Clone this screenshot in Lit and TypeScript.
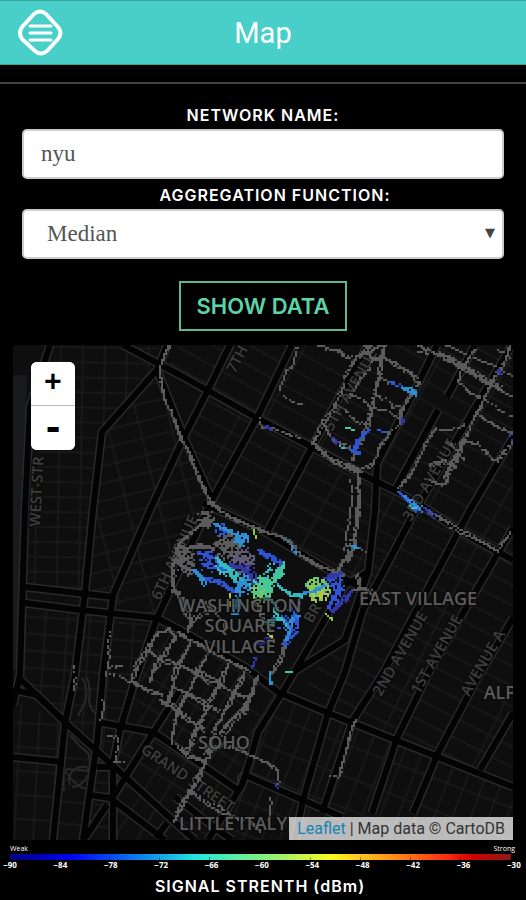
import { LitElement, html, svg, css } from "lit";
import { customElement, state } from "lit/decorators.js";

type Pt = [number, number];

/* ---------- street network ---------- */
const AVENUES: string[] = [
  "50,345 30,407 25,510 20,675 13,705",
  "167,345 157,370 102,432 93,510 85,593 75,675 65,723 53,840",
  "157,370 183,435 212,500",
  "230,345 208,390 185,435 150,510 113,595 103,675 97,743 83,840",
  "292,345 257,418 212,500 157,618 135,680 120,730 113,763 113,840",
  "368,345 312,447 268,530",
  "437,345 415,390 377,463 375,510 368,572 345,640 292,673",
  "368,572 345,585 292,676 282,693 258,732 250,760 242,785 208,840",
  "475,345 447,397",
  "438,410 395,490",
  "512,345 462,430 413,515 363,610 345,672 328,713 303,800 295,840",
  "513,437 470,510 382,675 353,720 322,813",
  "513,528 498,553 430,670 397,738 372,813",
  "513,618 478,677 438,753 413,813",
  "513,713 480,770",
  "123,345 180,375 257,418 312,447 363,475 398,492 425,508 458,530 498,552 513,560",
  "203,503 265,532 332,572 358,586",
  "25,587 113,597",
  "25,603 80,610 157,618 180,630 245,667 278,692 328,713 395,740 438,757 513,787",
  "13,690 37,695 68,725",
  "18,677 68,725 110,763 180,827 195,840",
  "13,757 62,762",
  "97,722 153,732 180,750 238,790",
  "245,775 342,817",
  "90,795 110,798 165,840",
  "113,797 153,733 180,690",
  "107,805 85,838",
  "167,823 156,838",
  "97,767 113,767",
  "175,797 215,828 232,840",
];

/* Blocks hatched with side streets: outline, angle, spacing across, spacing along */
const BLOCKS: [string, number, number, number][] = [
  ["180,345 513,345 513,560 425,508 312,447 165,370", 29, 18, 62],
  ["183,435 210,392 257,418 425,508 375,600 212,503", 28, 17, 58],
  ["425,508 513,560 513,787 300,698 370,572", 27, 18, 96],
  ["50,345 157,345 157,372 102,432 85,593 25,587", 1, 15, 22],
  ["157,372 183,435 205,500 157,618 85,593 102,432", -14, 17, 31],
  ["25,603 157,618 113,763 18,677", 4, 17, 22],
  ["13,700 68,725 53,840 13,840", 3, 24, 19],
  ["68,725 113,763 113,840 55,840", 5, 22, 31],
  ["157,618 278,692 208,840 113,840 113,763", 32, 26, 20],
  ["278,692 513,787 513,840 208,840", 21, 30, 17],
];

const RAMPS = [
  "M82,678 q6,8 4,22 l-8,16 M87,678 q4,10 2,22 q2,12 8,14",
  "M70,735 q12,14 18,18 q4,10 0,18 l-20,-2 q-6,0 -4,22",
  "M70,785 q-4,-14 10,-18 q12,-2 8,8 q-6,12 -16,12 M66,772 q14,20 24,16",
  "M238,777 l3,-4 l2,8 l-5,4 z M232,788 l4,2",
];

/* ---------- labels ---------- */
const PLACES: [string, number, number][] = [
  ["EAST VILLAGE", 418, 605],
  ["WASHINGTON", 240, 612],
  ["SQUARE", 240, 632],
  ["VILLAGE", 240, 653],
  ["SOHO", 224, 749],
  ["LITTLE ITALY", 233, 830],
  ["ALPHABET CITY", 550, 699],
];
const STREETS: [string, number, number, number][] = [
  ["WEST-STR", 40, 527, -87],
  ["7TH AVENUE", 235, 374, -62],
  ["6TH AVENUE", 160, 601, -65],
  ["5TH AVENUE", 332, 432, -60],
  ["3RD AVENUE", 411, 522, -60],
  ["2ND AVENUE", 381, 697, -60],
  ["1ST AVENUE", 419, 695, -60],
  ["AVENUE A", 469, 697, -60],
  ["GRAND STREET", 140, 752, 34],
  ["BR", 312, 624, -60],
];

/* ---------- signal samples ---------- */
const GREY = "#5b5b5b";
const NAVY = "#3136a8";
const BLUE = "#2b55d6";
const AZURE = "#2c8fd6";
const CYAN = "#33bcc0";
const TEAL = "#48c796";
const GREEN = "#8cc850";
const YELLOW = "#c2c244";

/* colour, wander in px, passes, points */
const TRACES: [string, number, number, Pt[]][] = [
  [GREY, 1, 3, [[169, 345], [160, 370], [165, 400], [172, 412], [180, 435], [190, 455], [200, 480], [211, 502], [222, 512]]],
  [GREY, 2, 1, [[297, 345], [292, 365], [285, 370], [278, 390]]],
  [GREY, 1, 1, [[284, 397], [292, 402], [302, 405]]],
  [GREY, 1, 2, [[317, 345], [330, 350], [340, 352], [345, 358]]],
  [GREY, 2, 1, [[259, 418], [262, 428], [278, 430], [303, 437]]],
  [GREY, 2, 2, [[345, 385], [335, 405], [322, 425], [313, 443]]],
  [GREY, 3, 4, [[313, 443], [325, 455], [345, 466], [360, 472]]],
  [GREY, 3, 2, [[325, 427], [332, 440], [350, 450]]],
  [GREY, 2, 2, [[345, 358], [362, 355], [383, 347]]],
  [GREY, 3, 4, [[365, 345], [372, 362], [383, 358], [384, 345]]],
  [GREY, 2, 3, [[383, 350], [378, 380], [372, 410], [366, 430], [352, 460]]],
  [GREY, 3, 3, [[383, 358], [400, 368], [413, 376], [418, 385]]],
  [GREY, 2, 1, [[380, 378], [395, 384]]],
  [GREY, 2, 2, [[418, 385], [408, 397], [402, 410], [401, 424]]],
  [GREY, 2, 1, [[375, 396], [388, 400], [393, 408], [402, 405]]],
  [GREY, 2, 1, [[372, 408], [385, 412], [400, 420]]],
  [GREY, 2, 1, [[350, 395], [362, 402], [372, 410]]],
  [GREY, 2, 1, [[345, 410], [355, 420], [368, 424]]],
  [GREY, 2, 2, [[400, 424], [388, 433], [378, 450], [373, 462], [360, 472], [350, 465]]],
  [GREY, 2, 2, [[345, 378], [352, 365], [372, 345]]],
  [GREY, 1, 1, [[350, 398], [360, 378], [370, 368]]],
  [GREY, 3, 4, [[358, 474], [359, 500], [357, 520], [354, 540], [347, 562]]],
  [GREY, 2, 1, [[350, 545], [363, 550], [365, 555]]],
  [GREY, 2, 1, [[350, 480], [353, 500], [350, 520], [345, 550]]],
  [GREY, 1, 2, [[418, 345], [440, 356], [462, 368], [490, 385], [513, 397]]],
  [GREY, 1, 1, [[415, 352], [430, 355]]],
  [GREY, 2, 3, [[440, 353], [455, 362], [478, 374], [500, 388]]],
  [GREY, 1, 1, [[445, 345], [465, 355]]],
  [GREY, 1, 2, [[475, 349], [462, 370], [458, 382], [470, 393], [482, 399]]],
  [GREY, 1, 2, [[510, 345], [503, 365], [490, 385], [480, 408], [467, 435], [460, 445]]],
  [GREY, 1, 1, [[475, 357], [490, 364], [513, 376]]],
  [GREY, 1, 1, [[498, 350], [511, 358]]],
  [GREY, 1, 1, [[483, 399], [497, 408], [513, 418]]],
  [GREY, 1, 2, [[478, 415], [495, 425], [513, 435]]],
  [GREY, 1, 2, [[436, 428], [425, 445], [410, 475], [398, 490]]],
  [GREY, 1, 1, [[436, 428], [450, 431], [465, 424]]],
  [GREY, 2, 2, [[462, 440], [478, 442], [488, 452], [496, 460], [505, 452], [512, 440]]],
  [GREY, 3, 4, [[465, 440], [458, 455], [450, 468], [445, 480]]],
  [GREY, 3, 3, [[430, 465], [445, 463], [457, 470]]],
  [GREY, 2, 2, [[430, 480], [445, 484], [448, 473]]],
  [GREY, 2, 1, [[448, 442], [458, 450], [465, 460]]],
  [GREY, 2, 2, [[425, 510], [445, 521], [458, 530], [480, 541], [498, 552]]],
  [GREY, 1, 2, [[498, 552], [503, 542], [512, 533]]],
  [GREY, 1, 3, [[208, 503], [230, 517], [250, 526], [272, 534], [288, 540], [302, 556], [322, 568], [345, 575]]],
  [GREY, 4, 5, [[345, 560], [340, 568], [337, 575]]],
  [GREY, 4, 5, [[352, 590], [365, 590], [374, 596]]],
  [GREY, 3, 3, [[357, 575], [362, 588]]],
  [GREY, 2, 2, [[200, 525], [180, 545], [174, 565], [174, 590], [185, 600]]],
  [GREY, 4, 4, [[176, 548], [200, 548], [215, 552]]],
  [GREY, 5, 4, [[186, 550], [180, 562], [192, 575]]],
  [GREY, 3, 3, [[176, 590], [184, 605], [190, 622]]],
  [GREY, 3, 2, [[200, 600], [215, 612], [225, 630]]],
  [GREY, 3, 2, [[188, 632], [196, 618], [212, 606]]],
  [GREY, 3, 2, [[255, 603], [262, 620], [270, 632]]],
  [GREY, 2, 3, [[285, 640], [283, 655], [275, 668], [268, 675]]],
  [GREY, 2, 1, [[110, 632], [111, 650], [108, 672]]],
  [GREY, 2, 2, [[107, 667], [122, 667]]],
  [GREY, 1, 1, [[105, 675], [122, 677], [133, 683]]],
  [GREY, 1, 1, [[103, 700], [101, 722]]],
  [GREY, 1, 1, [[108, 736], [117, 738], [116, 762]]],
  [GREY, 1, 1, [[115, 763], [125, 762]]],
  [GREY, 1, 1, [[75, 665], [76, 690]]],
  [GREY, 2, 3, [[133, 680], [137, 665], [150, 645], [158, 632], [168, 630], [176, 638]]],
  [GREY, 2, 3, [[176, 638], [165, 655], [155, 668], [150, 682]]],
  [GREY, 3, 3, [[133, 682], [148, 692], [162, 697]]],
  [GREY, 2, 2, [[148, 650], [160, 660], [178, 665], [195, 675], [212, 685]]],
  [GREY, 2, 3, [[178, 632], [190, 640], [210, 652], [232, 664], [250, 673]]],
  [GREY, 2, 3, [[190, 642], [180, 660], [173, 680], [168, 702]]],
  [GREY, 2, 3, [[208, 652], [200, 670], [190, 690], [178, 710], [173, 745]]],
  [GREY, 2, 3, [[228, 664], [220, 685], [210, 700], [200, 722], [188, 750]]],
  [GREY, 3, 6, [[258, 676], [252, 695], [245, 710], [232, 722], [222, 735]]],
  [GREY, 2, 3, [[245, 672], [236, 690], [228, 708], [215, 730], [206, 755]]],
  [GREY, 2, 3, [[160, 700], [175, 708], [190, 722], [205, 730]]],
  [GREY, 2, 2, [[172, 685], [190, 695], [208, 705], [220, 712]]],
  [GREY, 2, 2, [[195, 668], [215, 680], [235, 692], [250, 700]]],
  [GREY, 2, 3, [[175, 745], [190, 757], [205, 762], [215, 748], [225, 742]]],
  [GREY, 1, 2, [[225, 745], [240, 750], [255, 757], [267, 762], [278, 770]]],
  [GREY, 1, 1, [[278, 770], [278, 785]]],
  [GREY, 1, 1, [[270, 798], [271, 812], [268, 820]]],
  [GREY, 2, 3, [[205, 762], [197, 780], [188, 795], [178, 812], [174, 822]]],
  [GREY, 3, 2, [[188, 790], [205, 800], [225, 812], [245, 820]]],
  [GREY, 3, 2, [[250, 822], [262, 832]]],
  [GREY, 1, 2, [[355, 720], [350, 735], [347, 752], [342, 765], [340, 776]]],
  [GREY, 1, 1, [[327, 776], [342, 777]]],
  [NAVY, 1, 2, [[266, 427], [273, 430]]],
  [NAVY, 2, 2, [[332, 439], [338, 443]]],
  [CYAN, 1, 2, [[339, 445], [346, 448]]],
  [TEAL, 1, 1, [[346, 428], [354, 431]]],
  [BLUE, 1, 2, [[390, 382], [403, 387]]],
  [AZURE, 3, 6, [[403, 388], [416, 394]]],
  [NAVY, 2, 2, [[401, 418], [403, 424]]],
  [BLUE, 2, 3, [[370, 430], [360, 438], [355, 450]]],
  [BLUE, 3, 4, [[350, 450], [361, 454]]],
  [BLUE, 1, 2, [[378, 430], [386, 434]]],
  [NAVY, 1, 2, [[499, 370], [501, 375]]],
  [NAVY, 1, 1, [[511, 434], [512, 440]]],
  [BLUE, 3, 4, [[398, 492], [410, 500], [420, 512]]],
  [AZURE, 2, 2, [[403, 496], [414, 505], [424, 510]]],
  [TEAL, 1, 1, [[410, 506], [416, 509]]],
  [NAVY, 2, 2, [[422, 506], [435, 516]]],
  [AZURE, 1, 1, [[288, 543], [298, 555]]],
  [GREEN, 1, 1, [[253, 530], [255, 538]]],
  [AZURE, 3, 4, [[215, 524], [230, 533], [245, 540]]],
  [BLUE, 4, 5, [[198, 553], [215, 558], [225, 572]]],
  [BLUE, 3, 5, [[258, 550], [270, 556], [283, 563]]],
  [BLUE, 3, 4, [[200, 578], [220, 584], [235, 592]]],
  [NAVY, 4, 4, [[230, 565], [250, 570], [254, 585]]],
  [AZURE, 4, 4, [[193, 570], [205, 578], [208, 585]]],
  [CYAN, 4, 6, [[216, 558], [228, 570], [240, 582]]],
  [AZURE, 3, 4, [[240, 580], [238, 600], [235, 615]]],
  [TEAL, 4, 6, [[284, 562], [280, 575], [268, 585]]],
  [YELLOW, 1, 1, [[230, 595], [229, 606]]],
  [CYAN, 2, 3, [[278, 585], [290, 595], [302, 597]]],
  [BLUE, 3, 4, [[299, 602], [294, 615], [295, 630], [285, 645]]],
  [CYAN, 3, 3, [[265, 622], [280, 618], [292, 628]]],
  [AZURE, 2, 3, [[300, 615], [290, 622], [286, 640]]],
  [CYAN, 2, 2, [[272, 600], [277, 612], [272, 626]]],
  [YELLOW, 1, 1, [[268, 634], [275, 642]]],
  [NAVY, 2, 3, [[254, 645], [272, 638]]],
  [NAVY, 1, 2, [[255, 657], [252, 670]]],
  [AZURE, 2, 3, [[271, 672], [270, 684]]],
  [TEAL, 1, 1, [[287, 673], [294, 672]]],
  [NAVY, 3, 4, [[325, 578], [342, 572]]],
  [BLUE, 4, 4, [[340, 576], [338, 592], [330, 610]]],
  [NAVY, 3, 5, [[352, 590], [343, 600], [330, 612]]],
  [AZURE, 3, 3, [[302, 594], [315, 592], [328, 585]]],
  [GREEN, 1, 2, [[325, 615], [332, 620]]],
  [AZURE, 1, 2, [[352, 546], [358, 548]]],
  [NAVY, 1, 1, [[277, 783], [277, 789]]],
];

/* colour, centre, radius, number of samples */
const CLOUDS: [string, Pt, number, number][] = [
  [GREY, [206, 519], 9, 90],
  [GREY, [184, 560], 12, 110],
  [GREY, [228, 546], 14, 170],
  ["#5f5b74", [242, 560], 13, 130],
  [AZURE, [241, 540], 8, 50],
  [BLUE, [222, 530], 6, 24],
  [BLUE, [210, 562], 11, 50],
  [CYAN, [224, 568], 8, 44],
  [AZURE, [245, 583], 12, 100],
  [TEAL, [262, 588], 12, 190],
  [CYAN, [275, 572], 11, 60],
  [GREEN, [260, 595], 10, 22],
  [TEAL, [315, 588], 10, 50],
  [GREEN, [318, 590], 12, 110],
  [YELLOW, [320, 595], 9, 24],
  [BLUE, [335, 585], 11, 46],
  [BLUE, [285, 618], 14, 36],
];

function sampleLayers(): [string, string][] {
  let seed = 7919;
  const rnd = () => {
    seed = (seed * 1103515245 + 12345) % 2147483648;
    return seed / 2147483648;
  };
  const layers: [string, string][] = [];
  const put = (x: number, y: number) =>
    `M${Math.round(x / 2) * 2 - 1},${Math.round(y / 2) * 2 - 1}h2v2h-2z`;
  const trace = ([colour, wander, passes, pts]: (typeof TRACES)[number]) => {
    let d = "";
    for (let p = 0; p < passes; p++) {
      let off = 0;
      for (let i = 1; i < pts.length; i++) {
        const [x0, y0] = pts[i - 1];
        const [x1, y1] = pts[i];
        const len = Math.hypot(x1 - x0, y1 - y0) || 1;
        for (let s = 0; s < len; s += 2) {
          off += (rnd() - 0.5) * 2;
          off = Math.max(-wander, Math.min(wander, off));
          if (rnd() < 0.12) continue;
          const t = s / len;
          d += put(x0 + (x1 - x0) * t - ((y1 - y0) / len) * off, y0 + (y1 - y0) * t + ((x1 - x0) / len) * off);
        }
      }
    }
    layers.push([colour, d]);
  };
  const cloud = ([colour, [cx, cy], r, n]: (typeof CLOUDS)[number]) => {
    let d = "";
    for (let i = 0; i < n; i++) {
      const a = rnd() * Math.PI * 2;
      const q = Math.pow(rnd(), 0.7) * r;
      d += put(cx + Math.cos(a) * q, cy + Math.sin(a) * q);
    }
    layers.push([colour, d]);
  };
  TRACES.filter((t) => t[0] === GREY).forEach(trace);
  CLOUDS.forEach(cloud);
  TRACES.filter((t) => t[0] !== GREY).forEach(trace);
  return layers;
}

@customElement("signal-map")
export class SignalMap extends LitElement {
  private layers = sampleLayers();

  static styles = css`
    :host { display: block; position: relative; background: #0e0e0e; overflow: hidden; }
    .canvas { display: block; width: 100%; height: auto; }
    .side { stroke: #1a1a1a; stroke-width: 1.5; fill: none; }
    .casing { stroke: #292929; stroke-width: 9; fill: none; stroke-linejoin: round; }
    .road { stroke: #030303; stroke-width: 6; fill: none; stroke-linejoin: round; }
    .ramp { stroke: #292929; stroke-width: 2; fill: none; }
    .water { fill: #191a1b; }
    .place, .street { font-family: "Open Sans", "Noto Sans", sans-serif; font-weight: 600; paint-order: stroke; stroke: #0a0a0a; stroke-opacity: .6; stroke-width: 3; }
    .place { font-size: 18px; fill: #6c6c6c; text-anchor: middle; }
    .street { font-size: 15px; fill: #3e3e3e; }
    .zoom { position: absolute; left: 18px; top: 17px; display: flex; flex-direction: column; width: 44px; border-radius: 6px; overflow: hidden; background: #fff; }
    .zoom button { height: 44px; padding: 0 0 6px; border: 0; background: #fff; color: #000; font: bold 28px/36px "DejaVu Sans Mono", monospace; }
    .zoom .in { border-bottom: 1px solid #bbb; }
    .zoom .out { padding: 0; font-size: 36px; }
    .credit { position: absolute; right: 0; bottom: 0; padding: 0 8px; background: rgba(255, 255, 255, .72); color: #333; font: 16px/23px Roboto, sans-serif; }
    .credit a { color: #1583b5; text-decoration: none; }
  `;

  render() {
    return html`
      <svg class="canvas" viewBox="13 345 500 495" role="img" aria-label="Signal strength map">
        <defs>
          ${BLOCKS.map(([, angle, across, along], i) => svg`
            <pattern id="b${i}" patternUnits="userSpaceOnUse" width=${along} height=${across} patternTransform="rotate(${angle})">
              <path class="side" d="M0,1H${along}M1,0V${across}"></path>
            </pattern>`)}
        </defs>
        <polygon class="water" points="13,375 27,375 24,510 18,670 13,670"></polygon>
        ${BLOCKS.map(([pts], i) => svg`<polygon points=${pts} fill="url(#b${i})"></polygon>`)}
        ${AVENUES.map((p) => svg`<polyline class="casing" points=${p}></polyline>`)}
        ${RAMPS.map((d) => svg`<path class="ramp" d=${d}></path>`)}
        ${AVENUES.map((p) => svg`<polyline class="road" points=${p}></polyline>`)}
        ${STREETS.map(([t, x, y, a]) => svg`<text class="street" transform="translate(${x} ${y}) rotate(${a})">${t}</text>`)}
        <g>${this.layers.map(([c, d]) => svg`<path fill=${c} d=${d}></path>`)}</g>
        ${PLACES.map(([t, x, y]) => svg`<text class="place" fill-opacity=".85" x=${x} y=${y}>${t}</text>`)}
      </svg>
      <div class="zoom">
        <button class="in" type="button" aria-label="Zoom in">+</button>
        <button class="out" type="button" aria-label="Zoom out">-</button>
      </div>
      <div class="credit"><a href="#leaflet">Leaflet</a> | Map data © CartoDB</div>
    `;
  }
}

@customElement("signal-scale")
export class SignalScale extends LitElement {
  static styles = css`
    :host { display: block; color: #fff; }
    .ends { display: flex; justify-content: space-between; padding: 0 11px 0 10px; font: 7px/8px "Open Sans", sans-serif; }
    .bar { height: 6px; margin: 1px 15px 0 10px; background:
      repeating-linear-gradient(90deg, transparent 0 calc(10% - 1px), rgba(0, 0, 0, .35) calc(10% - 1px) 10%) 0 100% / 100% 3px no-repeat,
      linear-gradient(90deg, #00007f, #0000f0 12%, #0a78f0 25%, #22e6e0 37%, #7cf080 50%, #f8f820 64%, #ff9a18 75%, #ff3010 87%, #d00000 92%, #8b1a1a); }
    .ticks { display: flex; justify-content: space-between; margin: 0; padding: 0 2px 0 0; list-style: none; font: bold 8px/10px "Open Sans", sans-serif; }
    .ticks li { width: 20px; text-align: center; }
    .name { margin: 6px 0 0; padding-right: 6px; text-align: center; font: 600 16px/20px Inter, sans-serif; letter-spacing: 1px; }
  `;
  render() {
    const ticks = Array.from({ length: 11 }, (_, i) => 90 - i * 6);
    return html`
      <div class="ends"><span>Weak</span><span>Strong</span></div>
      <div class="bar"></div>
      <ul class="ticks">${ticks.map((t) => html`<li>−${t}</li>`)}</ul>
      <p class="name">SIGNAL STRENTH (dBm)</p>
    `;
  }
}

@customElement("app-root")
export class AppRoot extends LitElement {
  @state() private network = "nyu";

  static styles = css`
    :host { display: block; min-height: 100vh; background: #000; color: #fff; }
    * { box-sizing: border-box; }
    header { display: grid; grid-template-columns: 48px 1fr 48px; align-items: center; height: 65px; padding: 0 17px; background: #48cfc9; border-top: 1px solid #3aa8a2; border-bottom: 1px solid #3f9f9b; }
    .menu { width: 48px; height: 48px; padding: 0; border: 0; background: none; }
    .menu svg { display: block; }
    h1 { margin: 0; text-align: center; font: 400 29px/36px Roboto, sans-serif; }
    hr { margin: 17px 0 0; border: 0; border-top: 2px solid #444; }
    form { display: flex; flex-direction: column; align-items: center; padding: 21px 22px 0; }
    label { font: 600 16px/20px Inter, sans-serif; letter-spacing: 1px; margin-bottom: 4px; }
    .second { margin-top: 6px; padding-left: 24px; }
    .field { position: relative; width: 100%; }
    .box { display: block; width: 100%; height: 50px; border: 2px solid #ccc; border-radius: 5px; background: #fff; color: #555; font: 23px/30px "Liberation Serif", serif; appearance: none; outline: 0; }
    input.box { padding: 0 17px; }
    select.box { padding: 0 23px; }
    .arrow { position: absolute; right: 9px; top: 14px; color: #444; font: 13px/20px "DejaVu Sans", sans-serif; pointer-events: none; }
    .show { height: 50px; margin-top: 22px; padding: 0 16px; border: 2px solid #5cb898; background: #000; color: #5fd3a8; font: 600 22px/30px Inter, sans-serif; }
    signal-map { margin: 14px 13px 5px; }
  `;

  render() {
    return html`
      <header>
        <button class="menu" type="button" aria-label="Menu">
          <svg width="48" height="48" viewBox="0 0 48 48" fill="none" stroke="#fff" stroke-linecap="round">
            <path stroke-width="4" stroke-linejoin="round" d="M17 5 Q23 0 29 5 L41 18 Q46 24 41 30 L30 42 Q24 47 18 42 L5 30 Q1 24 5 18 Z"></path>
            <path stroke-width="3" d="M13 17H34M13 24H34M13 31H34"></path>
          </svg>
        </button>
        <h1>Map</h1>
      </header>
      <main>
        <hr />
        <form @submit=${(e: Event) => e.preventDefault()}>
          <label for="network">NETWORK NAME:</label>
          <div class="field">
            <input class="box" id="network" type="text" .value=${this.network}
              @input=${(e: Event) => (this.network = (e.target as HTMLInputElement).value)} />
          </div>
          <label class="second" for="aggregation">AGGREGATION FUNCTION:</label>
          <div class="field">
            <select class="box" id="aggregation"><option>Median</option></select>
            <span class="arrow" aria-hidden="true">▼</span>
          </div>
          <button class="show" type="submit">SHOW DATA</button>
        </form>
        <signal-map></signal-map>
        <signal-scale></signal-scale>
      </main>
    `;
  }
}
